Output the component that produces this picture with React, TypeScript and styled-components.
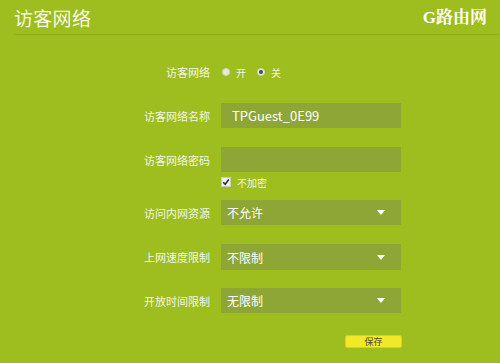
import React from 'react';
import styled, { createGlobalStyle } from 'styled-components';

const GlobalStyle = createGlobalStyle`
  html, body {
    margin: 0;
    padding: 0;
    background: #9ebd1e;
  }
  body {
    font-family: "Noto Sans CJK SC", "Noto Sans", sans-serif;
  }
`;

const Page = styled.div`
  width: 500px;
  height: 363px;
  background: #9ebd1e;
  overflow: hidden;
`;

const Header = styled.div`
  display: flex;
  justify-content: space-between;
  align-items: center;
  height: 34px;
  margin-left: 14px;
  padding-right: 13px;
  border-bottom: 1px solid #91ae1a;
`;

const Title = styled.h1`
  margin: 0;
  font-size: 19px;
  font-weight: 400;
  color: #f4f8e6;
  line-height: 1;
  letter-spacing: 0.3px;
`;

const Brand = styled.div`
  font-family: "Liberation Serif", "Noto Serif CJK SC", "Noto Sans CJK SC", serif;
  font-weight: 700;
  font-size: 17px;
  color: #ffffff;
  line-height: 1;
`;

const Form = styled.div`
  display: flex;
  flex-direction: column;
`;

const Row = styled.div<{ $top: number; $h: number }>`
  display: flex;
  align-items: center;
  margin-top: ${p => p.$top}px;
  height: ${p => p.$h}px;
`;

const Label = styled.div`
  width: 210px;
  text-align: right;
  font-size: 11px;
  color: #f2f6e2;
  flex-shrink: 0;
`;

const Field = styled.div`
  margin-left: 11px;
  width: 180px;
  height: 100%;
  display: flex;
  align-items: center;
`;

const Box = styled.div<{ $pad: number; $size: number }>`
  width: 100%;
  height: 100%;
  box-sizing: border-box;
  background: #8da636;
  display: flex;
  align-items: center;
  justify-content: space-between;
  padding: 0 16px 0 ${p => p.$pad}px;
  font-size: ${p => p.$size}px;
  color: #ffffff;
`;

const RadioItem = styled.label`
  display: flex;
  align-items: center;
  font-size: 10px;
  color: #f2f6e2;
  margin-right: 10px;
`;

const RadioDot = styled.span<{ $checked?: boolean }>`
  width: 8px;
  height: 8px;
  border-radius: 50%;
  box-sizing: border-box;
  background: #e6e8e0;
  border: 1px solid #d0d3c8;
  margin: 0 6px 0 1px;
  display: flex;
  align-items: center;
  justify-content: center;
  &::after {
    content: '';
    width: 4px;
    height: 4px;
    border-radius: 50%;
    background: ${p => (p.$checked ? '#4a4d55' : 'transparent')};
  }
`;

const Check = styled.span`
  width: 8px;
  height: 8px;
  background: #eef0ea;
  border: 1px solid #c9ccc0;
  margin: 0 6px 0 0;
  display: flex;
  align-items: center;
  justify-content: center;
`;

const CheckText = styled.span`
  font-size: 10px;
  color: #f2f6e2;
`;

const Arrow = styled.span`
  width: 0;
  height: 0;
  border-left: 4px solid transparent;
  border-right: 4px solid transparent;
  border-top: 5px solid #ffffff;
`;

const SaveButton = styled.button`
  margin-left: 345px;
  width: 57px;
  height: 13px;
  padding: 0;
  border: 1px solid #d9cf1e;
  border-radius: 2px;
  background: #f2e82a;
  color: #4a4a20;
  font-family: "Noto Sans CJK SC", sans-serif;
  font-size: 9px;
  line-height: 11px;
`;

const ButtonRow = styled.div`
  margin-top: 22px;
  display: flex;
`;

const selects = [
  { label: '访问内网资源', value: '不允许', top: 12, h: 25 },
  { label: '上网速度限制', value: '不限制', top: 19, h: 26 },
  { label: '开放时间限制', value: '无限制', top: 18, h: 25 },
];

export default function App() {
  return (
    <Page>
      <GlobalStyle />
      <Header>
        <Title>访客网络</Title>
        <Brand>G路由网</Brand>
      </Header>
      <Form>
        <Row $top={29} $h={16}>
          <Label>访客网络</Label>
          <Field>
            <RadioItem>
              <RadioDot />开
            </RadioItem>
            <RadioItem>
              <RadioDot $checked />关
            </RadioItem>
          </Field>
        </Row>
        <Row $top={23} $h={25}>
          <Label>访客网络名称</Label>
          <Field>
            <Box $pad={11} $size={13}>TPGuest_0E99</Box>
          </Field>
        </Row>
        <Row $top={19} $h={25}>
          <Label>访客网络密码</Label>
          <Field>
            <Box $pad={11} $size={13} />
          </Field>
        </Row>
        <Row $top={4} $h={12}>
          <Label />
          <Field>
            <Check>
              <svg width="8" height="8" viewBox="0 0 8 8">
                <path d="M1.2 4.2 L3.2 6.2 L6.8 1.6" fill="none" stroke="#2b2e36" strokeWidth="1.6" />
              </svg>
            </Check>
            <CheckText>不加密</CheckText>
          </Field>
        </Row>
        {selects.map(s => (
          <Row key={s.label} $top={s.top} $h={s.h}>
            <Label>{s.label}</Label>
            <Field>
              <Box $pad={6} $size={12}>
                {s.value}
                <Arrow />
              </Box>
            </Field>
          </Row>
        ))}
        <ButtonRow>
          <SaveButton>保存</SaveButton>
        </ButtonRow>
      </Form>
    </Page>
  );
}
